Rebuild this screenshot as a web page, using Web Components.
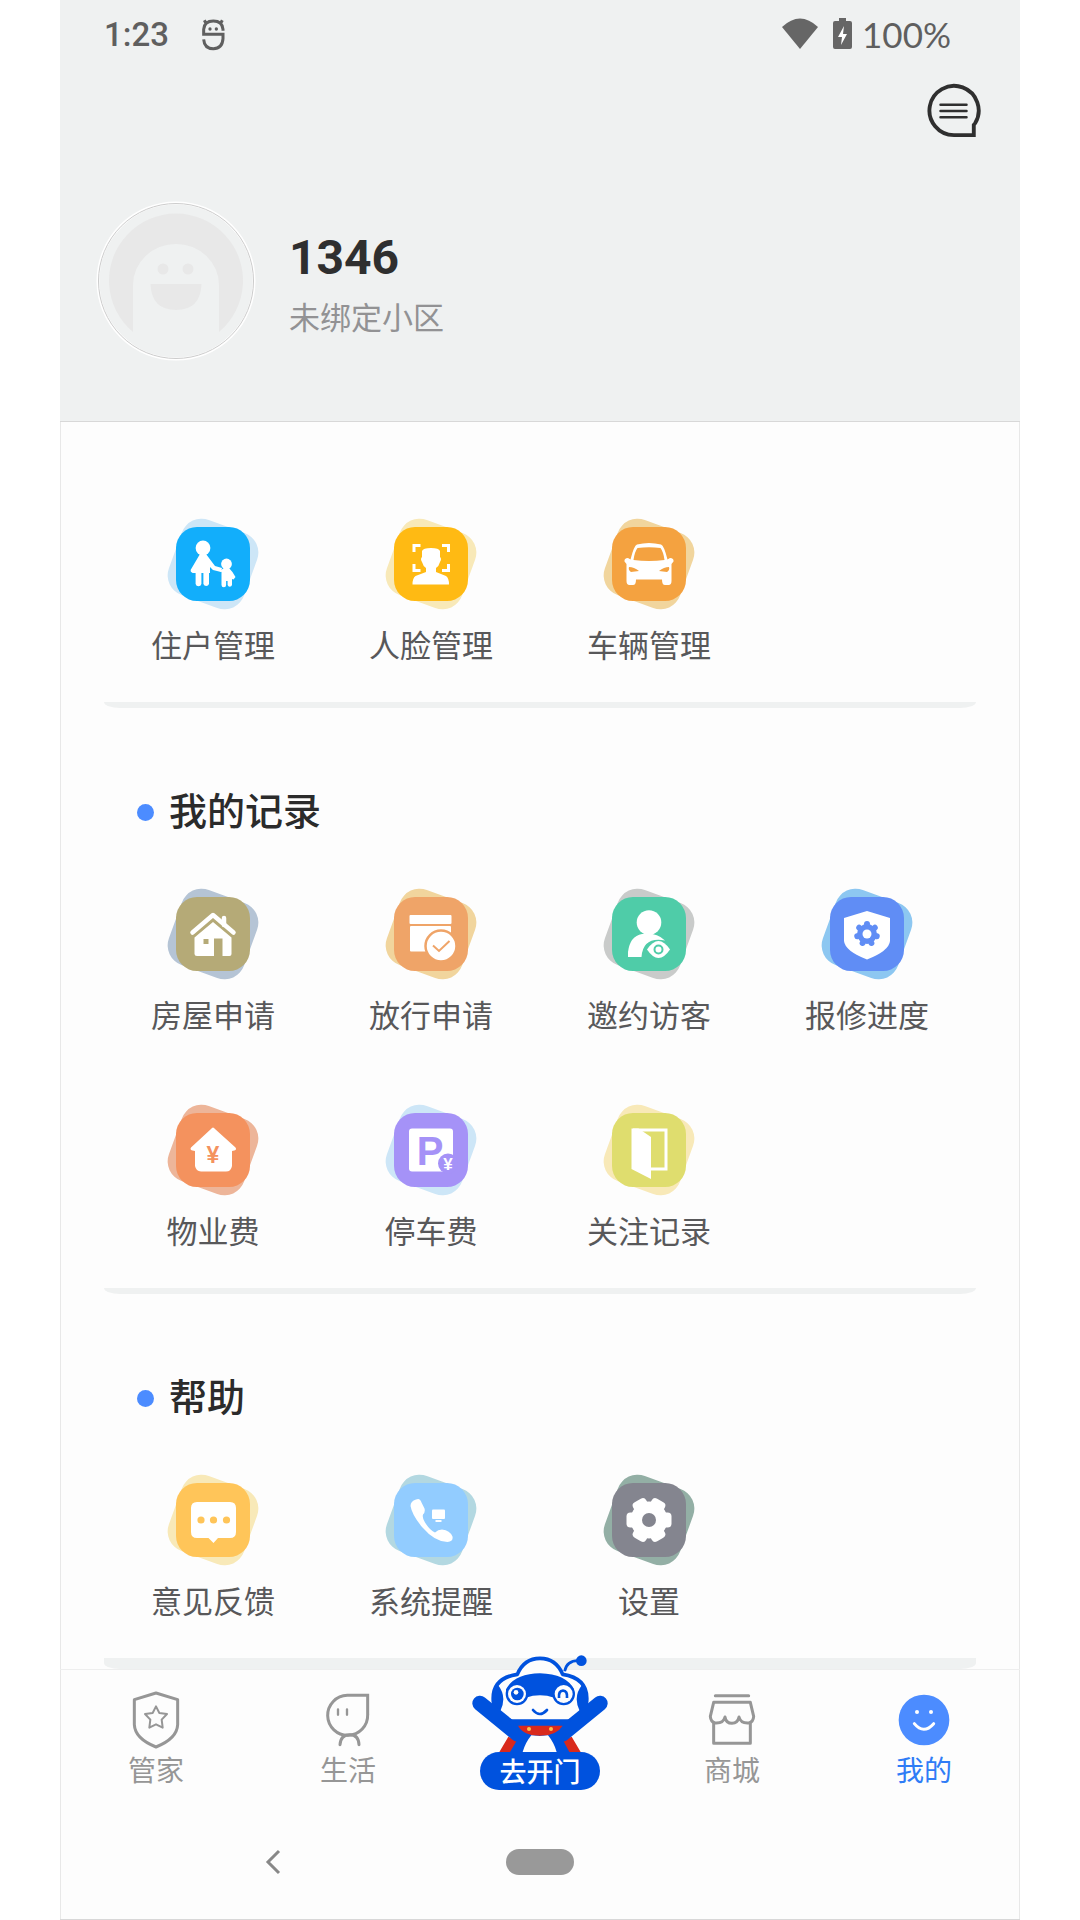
<!DOCTYPE html>
<html lang="zh-CN">
<head>
<meta charset="utf-8">
<meta name="viewport" content="width=device-width, initial-scale=1">
<title>我的</title>
<style>
    body {
        margin: 0;
        background: #fff;
        font-family: Roboto, "Noto Sans CJK SC", sans-serif;
    }
</style>
</head>
<body>
<my-page></my-page>

<script>
// White glyphs of the service tiles, drawn on a 92 x 92 board.
const GLYPHS = {
    family: `<circle cx="36" cy="30" r="7.4"/>
        <path d="M33 36h6l9 12 7 2-1 4-8-2-3-3v6h-1v11a3 3 0 0 1-5.600 0V55h-2v11a3 3 0 0 1-5.800 0V55h-3q-2.500-1-2-3z"/>
        <circle cx="59.500" cy="46" r="5.400"/>
        <path d="M57 50h5q4 4 6.500 9l-2 2.500-1.500-.5v6a2.300 2.300 0 0 1-4.400 0v-4h-1.500v4a2.300 2.300 0 0 1-4.600 0V54l-2-1z"/>`,
    face: `<path d="M29 34v-6.500h6.500M57 27.500h6.500V34M63.500 46v6.500H57M35.500 52.500H29V46" fill="none" stroke="#fff" stroke-width="3"/>
        <path d="M37 33q1-3 9-3t9 3v6q2 2 0 5-1 4-4 6v4l10 4q3 2 3 8.500H27.500q0-6.500 3-8.500L41 54v-4q-3-2-4-6-2-3 0-5z"/>`,
    car: `<path d="M34 26.500q12-3 24 0 3 1 6.500 15l2.500-1.500q4 0 3.500 3.500l-2 2.500v17q0 4-3 4h-3.500q-3 0-3-5.500H33q0 5.500-3 5.500h-3.500q-3 0-3-4V46l-2-2.500Q21 40 25 40l2.500 1.500q3.500-14 6.500-15z"/>
        <path d="M34.500 30q11.500-1.500 23 0 3 4 4 12-15.500 2-31 0 1-8 4-12zM26 49q5 0 10 4l-8 1q-3-2-2-5zM66 49q-5 0-10 4l8 1q3-2 2-5z" fill="var(--front)"/>`,
    house: `<path d="M25.500 44.500L46 27l20.500 17.500" fill="none" stroke="#fff" stroke-width="4.500" stroke-linecap="round" stroke-linejoin="round"/>
        <path d="M57 30v7" stroke="#fff" stroke-width="4.500" stroke-linecap="round"/>
        <path d="M46 34l18.500 15.500V66q0 2-2 2h-7V50.500h-8.500V68H30q-2.500 0-2.500-2V49.500z"/>
        <path d="M36.500 51h5v5h-5z" fill="var(--front)"/>`,
    release: `<rect x="24.500" y="27" width="42" height="9" rx="1"/>
        <rect x="25" y="38" width="41" height="25.500" rx="1"/>
        <circle cx="56" cy="58" r="15.500" stroke="var(--front)" stroke-width="2.500"/>
        <path d="M48 57.500l6 5.500 10.500-10" fill="none" stroke="var(--front)" stroke-width="2"/>`,
    visitor: `<circle cx="46" cy="34.500" r="12.300"/>
        <path d="M25 69v-5q2-16 14-18 14-2 23 6.500-22-4-23.500 16.500z"/>
        <path d="M44 61.500q11.500-17 23 0-11.500 17-23 0z"/>
        <circle cx="55.500" cy="61.500" r="4" fill="none" stroke="var(--front)" stroke-width="2"/>`,
    repair: `<path d="M46 23l23 7v23q-1 10-23 18.500Q24 63 23 53V30z"/>
        <g fill="var(--front)"><circle cx="46" cy="46" r="10"/>
        ${[0, 51, 103, 154, 206, 257, 309].map(angle => `<circle cx="46" cy="36" r="3" transform="rotate(${angle} 46 46)"/>`).join("")}</g>
        <circle cx="46" cy="46" r="4.500"/>`,
    fee: `<path d="M46 23.500q1 0 2 1.500l20.500 18.500q2 3-3.500 3.500v15q-1 5.500-6 5.500H34q-5-.5-6-5.500V47q-6-.5-4-3.500L44 25q1-1.500 2-1.500z"/>
        <text x="46" y="59" font-size="23" font-weight="700" fill="var(--front)">¥</text>`,
    parking: `<rect x="24" y="24.500" width="44" height="43" rx="3"/>
        <circle cx="63" cy="59.500" r="10" fill="var(--front)"/>
        <text x="45" y="61" font-size="40" font-weight="700" fill="var(--front)">P</text>
        <text x="63" y="66" font-size="17" font-weight="700">¥</text>`,
    door: `<path d="M30 26h33v39H47" fill="none" stroke="#fff" stroke-width="3"/>
        <path d="M28.500 24.500h7L48 33v42L28.500 65z"/>`,
    feedback: `<path d="M30 28h33q6 0 6 6v24q0 6-6 6H51l-4.500 5-5-5H30q-6 0-6-6V34q0-6 6-6z"/>
        <g fill="var(--front)"><circle cx="34" cy="46" r="3.600"/><circle cx="46.500" cy="46" r="3.600"/><circle cx="59.500" cy="46" r="3.600"/></g>`,
    phone: `<path d="M31 25.500q4-2 5.500 3l3 6q1 4-1.500 6-1 3 2 8 5 8 10 10 3-3 7-3 8 1 10.500 7 1 5-5 5.500Q50 68 37 53 27 41 25.500 32q0-5 5.500-6.500z"/>
        <rect x="47" y="35.500" width="13" height="9.500" rx="1"/><path d="M50.500 46h6v2h-6z"/>`,
    settings: `${[0, 60, 120, 180, 240, 300].map(angle => `<rect x="50" y="38.500" width="18.500" height="15" rx="4" transform="rotate(${angle} 46 46)"/>`).join("")}
        <circle cx="46" cy="46" r="18.500"/><circle cx="46" cy="46" r="7" fill="var(--front)"/>`
};

const TAB_ICONS = {
    steward: `<svg viewBox="198 150 180 180" fill="none" stroke="currentColor" stroke-width="9" stroke-linejoin="round">
        <path d="M288 159l65 20v75q-2 42-65 67-63-25-65-67v-75z"/>
        <path d="M288 199l10 20 23 3-16 17 3 24-20-10-20 10 3-24-16-17 23-3z" stroke-width="6"/></svg>`,
    life: `<svg viewBox="774 150 180 180" fill="none" stroke="currentColor" stroke-width="9" stroke-linecap="round">
        <path d="M862 166h61v58a60 60 0 1 1-61-58z" stroke-linecap="butt"/>
        <path d="M840 314q2-30 29-30t28 30"/><path d="M834 208v16M861 208v16" stroke-width="7"/></svg>`,
    mall: `<svg viewBox="186 150 180 180" fill="none" stroke="currentColor" stroke-width="9" stroke-linecap="round" stroke-linejoin="round">
        <path d="M226 167h100M221 187h110l10 42q-1 16-14 20-25 2-30-18-4 19-21 19-18 0-21-19-5 20-30 18-13-4-14-20zM221 249v61h110v-61"/></svg>`,
    mine: `<svg viewBox="762 150 180 180"><circle cx="852" cy="240" r="76" fill="#4c8cff"/>
        <g fill="#fff"><circle cx="831" cy="216" r="6"/><circle cx="873" cy="216" r="6"/></g>
        <path d="M823 251q28 34 58 0" fill="none" stroke="#fff" stroke-width="9" stroke-linecap="round"/></svg>`
};

class StatusBar extends HTMLElement {
    constructor() {
        super();
        this.attachShadow({ mode: "open" });
        this.shadowRoot.innerHTML = `<style>
            :host {
                display: flex;
                align-items: center;
                height: 68px;
                padding: 0 69px 0 44px;
                color: #5f5f5f;
            }
            time {
                margin-right: 30px;
                font-size: 33px;
                font-weight: 500;
            }
            .right {
                display: flex;
                align-items: center;
                margin-left: auto;
                font-family: Lato, sans-serif;
                font-size: 35px;
            }
            .wifi {
                margin-right: 14px;
            }
            .battery {
                margin-right: 10px;
            }
        </style>
        <time>1:23</time>
        <svg width="30" height="36" viewBox="436 48 90 108" fill="none" stroke="currentColor" stroke-width="9">
            <path d="M508 92v-4q-2-25-29-25t-29 25v15h58v13q-2 30-29 30t-29-28M457 70l-5-9M501 70l5-9"/>
            <g fill="currentColor" stroke="none"><circle cx="469" cy="87" r="5"/><circle cx="488" cy="87" r="5"/></g>
        </svg>
        <div class="right">
            <svg class="wifi" width="38" height="32" viewBox="0 0 38 32" fill="#666"><path d="M1 9q18-17 36 0L19 31z"/></svg>
            <svg class="battery" width="19" height="32" viewBox="0 0 19 32"><path d="M6 0h7v3h4q2 0 2 2v24q0 2-2 2H2q-2 0-2-2V5q0-2 2-2h4z" fill="#666"/><path d="M11 8L5 19h4l-1 8 6-11h-4z" fill="#fff"/></svg>
            <span>100%</span>
        </div>`;
    }
}

class ProfileHeader extends HTMLElement {
    constructor() {
        super();
        this.attachShadow({ mode: "open" });
        this.shadowRoot.innerHTML = `<style>
            :host {
                display: block;
                background: #eff1f1;
                border-bottom: 1px solid #d8d8d8;
            }
            .toolbar {
                display: flex;
                justify-content: flex-end;
                padding: 14px 38px 0;
            }
            button {
                padding: 0;
                border: 0;
                background: none;
            }
            svg {
                display: block;
            }
            .profile {
                display: flex;
                align-items: center;
                gap: 33px;
                padding: 63px 36px 60px;
            }
            .text {
                padding-top: 3px;
            }
            h1 {
                margin: 0 0 7px;
                color: #2f2f2f;
                font-size: 48px;
                font-weight: 700;
                line-height: 66px;
            }
            p {
                margin: 0;
                color: #929294;
                font-size: 31px;
                line-height: 42px;
            }
        </style>
        <status-bar></status-bar>
        <div class="toolbar">
            <button aria-label="消息">
                <svg width="56" height="56" viewBox="-1 -1 58 58" fill="none" stroke="#2f2f2f" stroke-width="4">
                    <path d="M48.500 54H28A25.500 25.500 0 1 1 50 41.500l-1.500 2z"/>
                    <path d="M14 22.500h27M14 29h27M14 35.500h27" stroke-width="2.500" stroke-linecap="round"/>
                </svg>
            </button>
        </div>
        <div class="profile">
            <svg width="160" height="160" viewBox="0 0 160 160" fill="#e8e8e8">
                <circle cx="80" cy="80" r="78" fill="#eff1f1" stroke="#fff" stroke-width="3"/>
                <circle cx="80" cy="80" r="77.500" fill="none" stroke="#ccc"/>
                <path d="M37 131a67 67 0 1 1 86 0V84a43 41 0 0 0-86 0z"/>
                <circle cx="67" cy="68" r="5.500"/><circle cx="92" cy="68" r="5.500"/>
                <path d="M54.500 83h51q-1 26-25.500 26T54.500 83z"/>
            </svg>
            <div class="text">
                <h1><slot name="name"></slot></h1>
                <p><slot name="community"></slot></p>
            </div>
        </div>`;
    }
}

class ServiceTile extends HTMLElement {
    constructor() {
        super();
        this.attachShadow({ mode: "open" });
    }
    connectedCallback() {
        this.shadowRoot.innerHTML = `<style>
            :host {
                display: block;
                --front: ${this.getAttribute("front")};
                --back: ${this.getAttribute("back")};
            }
            button {
                display: flex;
                flex-direction: column;
                align-items: center;
                gap: 14px;
                width: 100%;
                padding: 0;
                border: 0;
                background: none;
                color: #58585a;
                font: inherit;
                font-size: 31px;
                line-height: 46px;
            }
            text {
                font-family: "Liberation Sans", sans-serif;
                text-anchor: middle;
            }
        </style>
        <button>
            <svg width="92" height="92" viewBox="0 0 92 92" fill="#fff">
                <rect x="6" y="6" width="80" height="80" rx="21" fill="var(--back)" transform="rotate(20 46 46)"/>
                <rect x="9" y="9" width="74" height="74" rx="21" fill="var(--front)"/>
                ${GLYPHS[this.getAttribute("icon")]}
            </svg>
            <span><slot></slot></span>
        </button>`;
    }
}

class ServiceSection extends HTMLElement {
    constructor() {
        super();
        this.attachShadow({ mode: "open" });
    }
    connectedCallback() {
        const heading = this.getAttribute("heading");
        this.shadowRoot.innerHTML = `<style>
            :host {
                display: flex;
                flex-direction: column;
                padding: 0 44px;
            }
            h2 {
                display: flex;
                align-items: center;
                gap: 15px;
                margin: 76px 33px 48px;
                color: #2b2b2b;
                font-size: 38px;
                font-weight: 500;
                line-height: 56px;
            }
            h2::before {
                content: "";
                width: 17px;
                height: 17px;
                border-radius: 50%;
                background: #4c8cff;
            }
            .tiles {
                display: grid;
                grid-template-columns: repeat(4, 1fr);
                row-gap: 64px;
                padding-bottom: 32px;
            }
            .tiles:first-of-type {
                padding-top: ${heading ? 0 : 96}px;
            }
            .bar {
                flex: 1 0 6px;
                background: #eff1f1;
                border-radius: 0 0 16px 16px / 0 0 6px 6px;
            }
        </style>
        ${heading ? `<h2>${heading}</h2>` : ""}
        <div class="tiles"><slot></slot></div>
        <div class="bar"></div>`;
    }
}

class TabItem extends HTMLElement {
    constructor() {
        super();
        this.attachShadow({ mode: "open" });
    }
    connectedCallback() {
        this.shadowRoot.innerHTML = `<style>
            :host {
                display: block;
                color: #969696;
            }
            :host([selected]) {
                color: #2f7cf6;
            }
            a {
                display: flex;
                flex-direction: column;
                align-items: center;
                gap: 2px;
                color: inherit;
                font-size: 28px;
                line-height: 40px;
                text-decoration: none;
            }
            svg {
                width: 60px;
                height: 60px;
            }
        </style>
        <a href="#${this.getAttribute("icon")}">
            ${TAB_ICONS[this.getAttribute("icon")]}
            <span><slot></slot></span>
        </a>`;
    }
}

class DoorButton extends HTMLElement {
    constructor() {
        super();
        this.attachShadow({ mode: "open" });
        this.shadowRoot.innerHTML = `<style>
            :host {
                display: block;
                margin: -36px 0 2px;
            }
            button {
                display: flex;
                flex-direction: column;
                align-items: center;
                width: 100%;
                padding: 0;
                border: 0;
                background: none;
                font: inherit;
            }
            svg {
                display: block;
            }
            span {
                width: 120px;
                padding-top: 4px;
                border-radius: 19px;
                background: #0052de;
                color: #fff;
                font-size: 27px;
                font-weight: 500;
                line-height: 34px;
            }
        </style>
        <button>
            <svg width="136" height="98" viewBox="94 72 408 294">
                <path d="M372 124q6-34 45-32" fill="none" stroke="#0052de" stroke-width="8"/>
                <circle cx="422" cy="92" r="16" fill="#0052de"/>
                <path d="M203 320l-27 46h40l18-34zM393 320l27 46h-40l-18-34z" fill="#d9291c"/>
                <path d="M158 215q-6-70 72-82 20-48 68-48t68 48q78 12 72 82-8 40-50 58H210q-46-18-52-58z" fill="#fdfdfd" stroke="#0052de" stroke-width="11" stroke-linejoin="round"/>
                <path d="M172 165q28 35 7 78-24-12-25-33 0-24 18-45zM424 165q-28 35-7 78 24-12 25-33 0-24-18-45z" fill="#0052de"/>
                <path d="M196 178q24-46 102-48 78 2 102 48 0 44-34 46-22-28-68-28t-68 28q-34-2-34-46z" fill="#0052de"/>
                <g fill="#0052de" stroke="#0052de" stroke-width="6"><circle cx="229" cy="192" r="31"/><circle cx="369" cy="192" r="31"/></g>
                <circle cx="229" cy="192" r="27" fill="#fdfdfd"/><circle cx="230" cy="192" r="19" fill="#0052de"/><circle cx="226" cy="187" r="7" fill="#fdfdfd"/>
                <circle cx="369" cy="192" r="27" fill="#fdfdfd"/>
                <path d="M355 204q-2-22 12-22t12 22" fill="none" stroke="#0052de" stroke-width="8"/>
                <path d="M277 240q20 24 42 0" fill="none" stroke="#0052de" stroke-width="8" stroke-linecap="round"/>
                <path d="M118 220l113 92M478 220l-113 92" stroke="#0052de" stroke-width="46" stroke-linecap="round"/>
                <path d="M205 270h186l-23 62 18 34H208l20-34z" fill="#0052de"/>
                <path d="M232 287h134q-18 30-68 30t-66-30z" fill="#d9291c"/>
                <circle cx="265" cy="297" r="6" fill="#ffc24a"/><circle cx="331" cy="297" r="6" fill="#ffc24a"/>
                <path d="M272 316q26 4 50 0 18 22 26 50H246q8-28 26-50z" fill="#fdfdfd"/>
            </svg>
            <span><slot></slot></span>
        </button>`;
    }
}

class SystemNav extends HTMLElement {
    constructor() {
        super();
        this.attachShadow({ mode: "open" });
        this.shadowRoot.innerHTML = `<style>
            :host {
                display: grid;
                grid-template-columns: 1fr 68px 1fr;
                align-items: center;
                height: 115px;
            }
            button {
                padding: 0;
                border: 0;
                background: none;
            }
            .back {
                justify-self: center;
                padding-right: 20px;
            }
            .back svg {
                display: block;
            }
            .home {
                height: 26px;
                border-radius: 13px;
                background: #999;
            }
        </style>
        <button class="back" aria-label="返回">
            <svg width="20" height="28" viewBox="0 0 20 28" fill="none" stroke="#888" stroke-width="3"><path d="M16 3L5 14l11 11"/></svg>
        </button>
        <button class="home" aria-label="主页"></button>`;
    }
}

class MyPage extends HTMLElement {
    constructor() {
        super();
        this.attachShadow({ mode: "open" });
        this.shadowRoot.innerHTML = `<style>
            :host {
                display: flex;
                flex-direction: column;
                box-sizing: border-box;
                min-height: 100vh;
                margin: 0 60px;
                border-bottom: 1px solid #d8d8d8;
                background: #fdfdfd;
                box-shadow: inset 1px 0 #e8e8e8, inset -1px 0 #e8e8e8;
            }
            main {
                display: flex;
                flex: 1;
                flex-direction: column;
            }
            service-section:last-child {
                flex: 1;
            }
            nav {
                display: grid;
                grid-template-columns: repeat(5, 1fr);
                align-items: end;
                padding: 20px 0 12px;
                border-top: 1px solid #eee;
            }
        </style>
        <profile-header>
            <span slot="name">1346</span>
            <span slot="community">未绑定小区</span>
        </profile-header>
        <main>
            <service-section>
                <service-tile icon="family" front="#12aefb" back="#cde6f7">住户管理</service-tile>
                <service-tile icon="face" front="#ffba13" back="#f8e9b8">人脸管理</service-tile>
                <service-tile icon="car" front="#f4a240" back="#f1d59d">车辆管理</service-tile>
            </service-section>
            <service-section heading="我的记录">
                <service-tile icon="house" front="#b5aa77" back="#b5c4d5">房屋申请</service-tile>
                <service-tile icon="release" front="#efa468" back="#f1d59d">放行申请</service-tile>
                <service-tile icon="visitor" front="#4fcca8" back="#c9cbca">邀约访客</service-tile>
                <service-tile icon="repair" front="#608df5" back="#8dc7f1">报修进度</service-tile>
                <service-tile icon="fee" front="#f4925e" back="#edb599">物业费</service-tile>
                <service-tile icon="parking" front="#a592f7" back="#cde6f7">停车费</service-tile>
                <service-tile icon="door" front="#dfdd6e" back="#f8e9b8">关注记录</service-tile>
            </service-section>
            <service-section heading="帮助">
                <service-tile icon="feedback" front="#ffc559" back="#f8e9b8">意见反馈</service-tile>
                <service-tile icon="phone" front="#92ccff" back="#b3d8e1">系统提醒</service-tile>
                <service-tile icon="settings" front="#84858f" back="#93afa5">设置</service-tile>
            </service-section>
        </main>
        <nav>
            <tab-item icon="steward">管家</tab-item>
            <tab-item icon="life">生活</tab-item>
            <door-button>去开门</door-button>
            <tab-item icon="mall">商城</tab-item>
            <tab-item icon="mine" selected>我的</tab-item>
        </nav>
        <system-nav></system-nav>`;
    }
}

customElements.define("status-bar", StatusBar);
customElements.define("profile-header", ProfileHeader);
customElements.define("service-tile", ServiceTile);
customElements.define("service-section", ServiceSection);
customElements.define("tab-item", TabItem);
customElements.define("door-button", DoorButton);
customElements.define("system-nav", SystemNav);
customElements.define("my-page", MyPage);
</script>
</body>
</html>
